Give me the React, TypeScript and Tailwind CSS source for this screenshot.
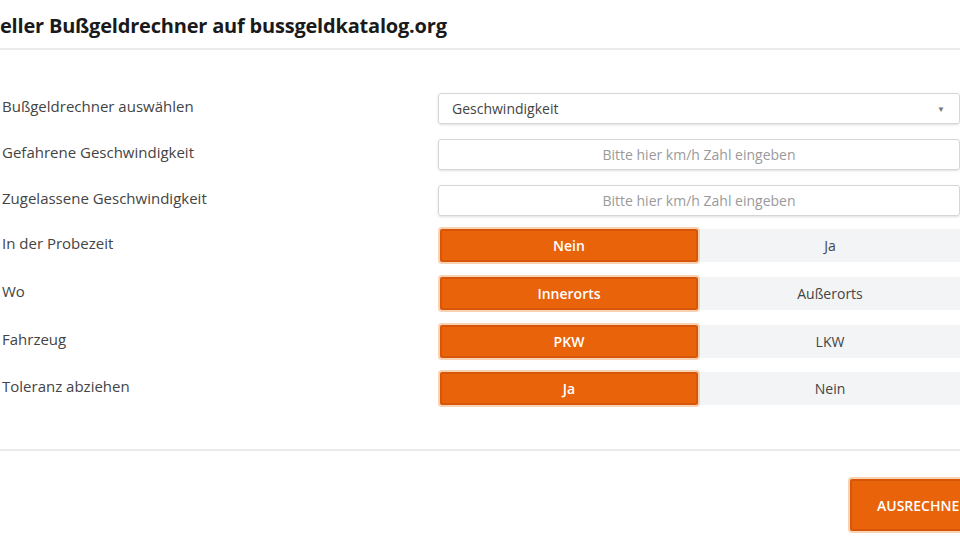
import { useState } from 'react';

const font = { fontFamily: '"Open Sans", "Liberation Sans", sans-serif' };

function Toggle({ options, initial = 0 }: { options: [string, string]; initial?: number }) {
  const [active, setActive] = useState(initial);
  return (
    <div className="flex h-[33px] w-full">
      {options.map((opt, i) =>
        i === active ? (
          <button
            key={opt}
            onClick={() => setActive(i)}
            className="w-[258px] bg-[#e8630a] border-2 border-[#d6560a] rounded-[2px] ring-2 ring-[#f9d2b4] text-white text-[14px] font-semibold ml-[2px] mr-[2px]"
          >
            {opt}
          </button>
        ) : (
          <button
            key={opt}
            onClick={() => setActive(i)}
            className="flex-1 bg-[#f2f4f6] text-[#444] text-[14px]"
          >
            {opt}
          </button>
        )
      )}
    </div>
  );
}

function Row({ label, children, top }: { label: string; children: React.ReactNode; top: string }) {
  return (
    <div className={`flex items-center ${top}`}>
      <label className="w-[438px] pl-[2px] text-[15px] text-[#444] -translate-y-[2px]">{label}</label>
      <div className="flex-1">{children}</div>
    </div>
  );
}

export default function App() {
  return (
    <div className="w-[960px] h-[540px] overflow-hidden bg-white" style={font}>
      <div className="h-[50px] border-b-2 border-[#ebebeb] flex items-center">
        <h1 className="text-[20px] font-bold text-[#1a1a1a] tracking-[-0.2px] pt-[4px]">
          eller Bußgeldrechner auf bussgeldkatalog.org
        </h1>
      </div>

      <form className="pt-[43px] pb-[44px] border-b-2 border-[#ebebeb]">
        <Row label="Bußgeldrechner auswählen" top="">
          <div className="h-[31px] border border-[#d6d6d6] rounded-[3px] shadow-sm flex items-center justify-between pl-[13px] pr-[14px]">
            <span className="text-[14px] text-[#444]">Geschwindigkeit</span>
            <span className="text-[8px] text-[#777]">▼</span>
          </div>
        </Row>
        <Row label="Gefahrene Geschwindigkeit" top="mt-[15px]">
          <input
            placeholder="Bitte hier km/h Zahl eingeben"
            className="w-full h-[31px] border border-[#d6d6d6] rounded-[3px] shadow-sm text-center text-[14px] placeholder:text-[#9a9a9a]"
          />
        </Row>
        <Row label="Zugelassene Geschwindigkeit" top="mt-[15px]">
          <input
            placeholder="Bitte hier km/h Zahl eingeben"
            className="w-full h-[31px] border border-[#d6d6d6] rounded-[3px] shadow-sm text-center text-[14px] placeholder:text-[#9a9a9a]"
          />
        </Row>
        <Row label="In der Probezeit" top="mt-[13px]">
          <Toggle options={['Nein', 'Ja']} />
        </Row>
        <Row label="Wo" top="mt-[15px]">
          <Toggle options={['Innerorts', 'Außerorts']} />
        </Row>
        <Row label="Fahrzeug" top="mt-[15px]">
          <Toggle options={['PKW', 'LKW']} />
        </Row>
        <Row label="Toleranz abziehen" top="mt-[14px]">
          <Toggle options={['Ja', 'Nein']} />
        </Row>
      </form>

      <div className="flex justify-end pt-[28px]">
        <button className="h-[52px] w-[150px] shrink-0 bg-[#e8630a] border-2 border-[#d6560a] ring-2 ring-[#f9d2b4] rounded-[2px] text-white text-[14px] font-semibold uppercase text-left pl-[25px] -mr-[40px]">
          Ausrechnen
        </button>
      </div>
    </div>
  );
}
